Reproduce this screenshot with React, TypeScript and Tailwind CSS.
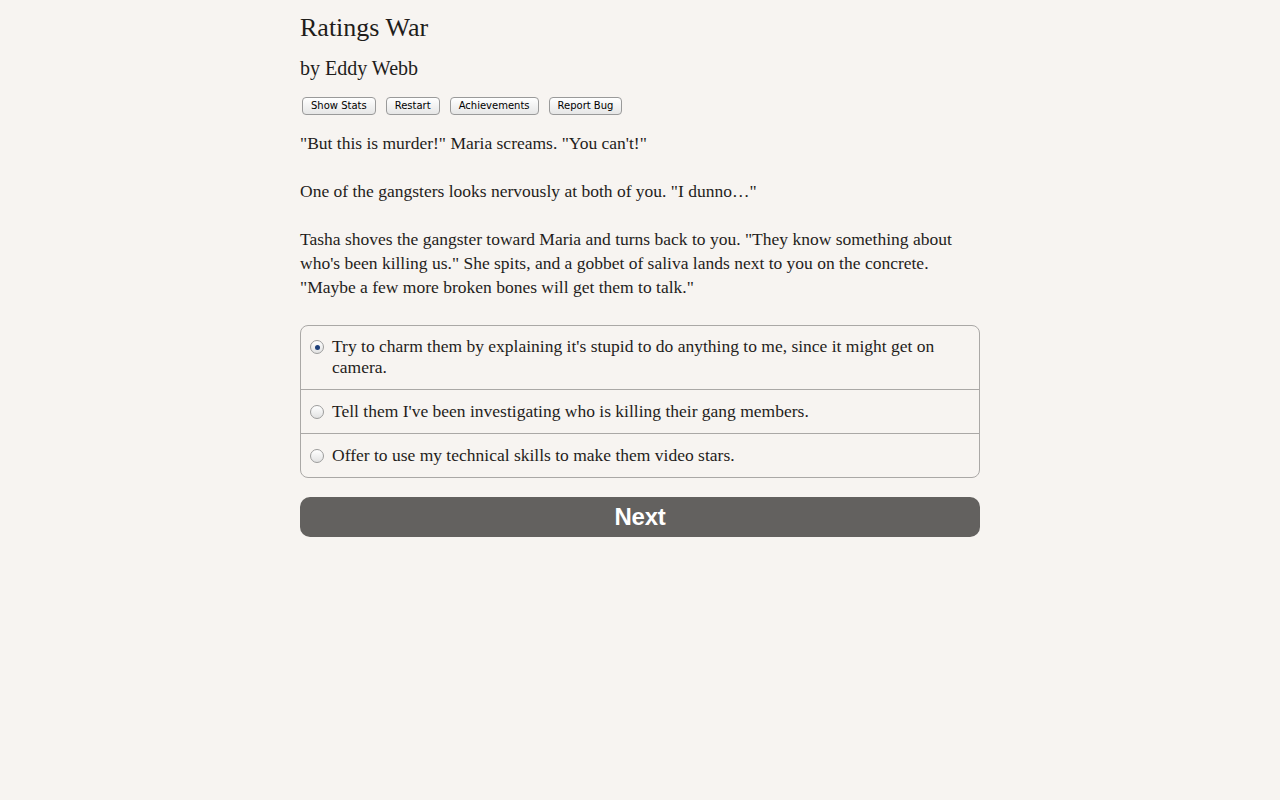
import { useState } from "react";

const choices = [
  "Try to charm them by explaining it's stupid to do anything to me, since it might get on camera.",
  "Tell them I've been investigating who is killing their gang members.",
  "Offer to use my technical skills to make them video stars.",
];

export default function App() {
  const [selected, setSelected] = useState(0);

  return (
    <div className="min-h-screen bg-[#f7f4f1] text-[#1f1d1b] font-['Liberation_Serif',serif]">
      <div className="w-[680px] mx-auto pt-[12px]">
        <h1 className="text-[26px] leading-[32px]">Ratings War</h1>
        <h2 className="text-[20px] leading-[24px] mt-[12px]">by Eddy Webb</h2>

        <div className="flex gap-[10px] mt-[17px] ml-[2px] font-['DejaVu_Sans',sans-serif]">
          {["Show Stats", "Restart", "Achievements", "Report Bug"].map((b) => (
            <button
              key={b}
              className="h-[18px] px-[8px] text-[10px] leading-none rounded-[4px] border border-[#9a9a9a] bg-gradient-to-b from-white to-[#e6e6e6] text-black"
            >
              {b}
            </button>
          ))}
        </div>

        {/* story text */}
        <div className="text-[17.5px] leading-[24px] mt-[16px] space-y-[24px]">
          <p>"But this is murder!" Maria screams. "You can't!"</p>
          <p>One of the gangsters looks nervously at both of you. "I dunno…"</p>
          <p>
            Tasha shoves the gangster toward Maria and turns back to you. "They know something about
            who's been killing us." She spits, and a gobbet of saliva lands next to you on the concrete.
            "Maybe a few more broken bones will get them to talk."
          </p>
        </div>

        {/* choices */}
        <div className="mt-[26px] border border-[#aaa8a6] rounded-[8px]">
          {choices.map((c, i) => (
            <label
              key={i}
              onClick={() => setSelected(i)}
              className={`flex items-start px-[9px] pb-[11px] text-[17.5px] leading-[21px] cursor-pointer ${i > 0 ? "border-t border-[#aaa8a6] pt-[11px]" : "pt-[10px]"}`}
            >
              <span className="shrink-0 mt-[4px] mr-[8px] w-[14px] h-[14px] rounded-full border border-[#9c9c9c] bg-gradient-to-b from-white to-[#e2e2e2] flex items-center justify-center">
                {selected === i && <span className="w-[5px] h-[5px] rounded-full bg-[#1d3f7a]" />}
              </span>
              <span>{c}</span>
            </label>
          ))}
        </div>

        <button className="mt-[19px] w-full h-[40px] rounded-[10px] bg-[#63615f] text-white font-bold text-[24px] font-['Liberation_Sans',sans-serif] tracking-[-0.3px]">
          Next
        </button>
      </div>
    </div>
  );
}
